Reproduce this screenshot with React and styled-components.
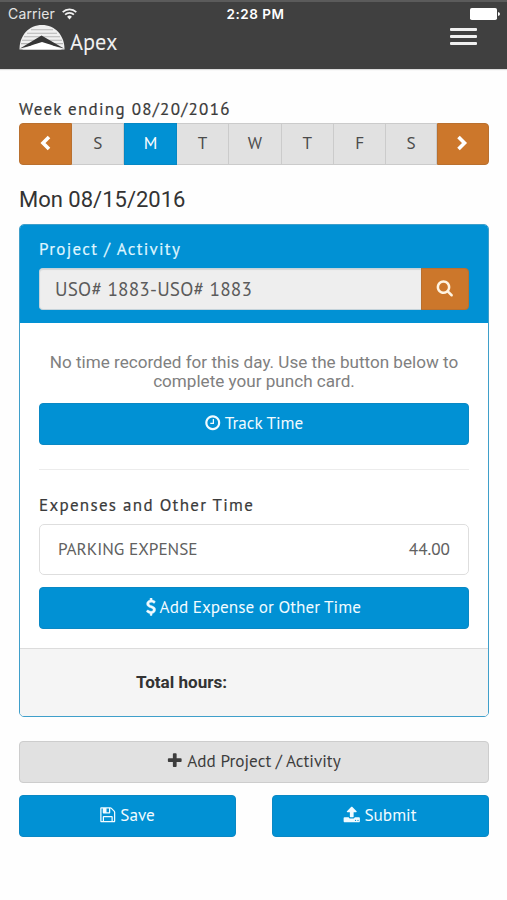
import React from 'react';
import styled, { createGlobalStyle } from 'styled-components';

const blue = '#0191d4';
const orange = '#cc772b';
const humanist = `'PT Sans', 'Noto Sans', 'Open Sans', sans-serif`;

const GlobalStyle = createGlobalStyle`
  * { box-sizing: border-box; }
  body {
    margin: 0;
    background: #fefefe;
    color: #333;
    font-family: Roboto, sans-serif;
  }
  button, input { font: inherit; margin: 0; }
`;

const Screen = styled.div`
  width: 507px;
  height: 900px;
  overflow: hidden;
`;

const TopBar = styled.header`
  height: 69px;
  background: #404040;
  border-top: 2px solid #5b5b5b;
  box-shadow: 0 1px 1px #ddd;
`;

const StatusBar = styled.div`
  display: grid;
  grid-template-columns: 1fr auto 1fr;
  align-items: center;
  height: 22px;
  padding: 1px 7px 0 8px;
  color: #e4e4e4;
  font: 14px/20px Inter, sans-serif;
`;

const Carrier = styled.div`
  display: flex;
  align-items: center;
  gap: 7px;
  letter-spacing: 0.15px;
`;

const Clock = styled.div`
  color: #fff;
  padding-left: 3px;
  font-size: 13.5px;
  font-weight: 600;
  letter-spacing: 0.5px;
`;

const BatteryIcon = styled.svg`
  justify-self: end;
`;

const NavRow = styled.div`
  display: flex;
  align-items: flex-start;
  justify-content: space-between;
  padding: 0 30px 0 19px;
`;

const Brand = styled.div`
  display: flex;
  gap: 5px;
`;

const BrandName = styled.span`
  color: #f0f0f0;
  font: 22.3px/28px ${humanist};
  padding-top: 4px;
`;

const MenuButton = styled.button`
  display: flex;
  flex-direction: column;
  gap: 4px;
  padding: 4px 0 0;
  border: 0;
  background: none;
`;

const MenuLine = styled.span`
  width: 27px;
  height: 3px;
  background: #f0f0f0;
  border-radius: 1px;
`;

const Content = styled.main`
  padding: 28px 18px 0 19px;
`;

const Label = styled.h4`
  margin: 0;
  color: ${p => p.$color || '#3b3b3b'};
  font: 400 17px/24px ${humanist};
  letter-spacing: 1.29px;
  -webkit-text-stroke: 0.2px;
`;

const WeekPicker = styled.div`
  display: grid;
  grid-template-columns: 53px repeat(6, 52.4px) 1fr 52px;
  height: 42px;
  margin-top: 2px;
`;

const WeekCell = styled.button`
  display: flex;
  align-items: center;
  justify-content: center;
  padding: 0 0 3px;
  border: 1px solid ${p => (p.$nav ? '#b9702f' : p.$active ? '#0587c4' : '#cbcbcb')};
  border-left-width: ${p => (p.$nav || p.$active ? '1px' : '0')};
  border-radius: ${p => p.$radius || 0};
  background: ${p => (p.$nav ? orange : p.$active ? blue : '#e1e1e1')};
  color: ${p => (p.$nav || p.$active ? '#fff' : '#4b4b4b')};
  font: 17.2px/22px ${humanist};
`;

const DayTitle = styled.h3`
  margin: 20px 0 9px;
  font-size: 22px;
  font-weight: 400;
  line-height: 30px;
`;

const Panel = styled.section`
  height: 493px;
  border: 1px solid #3f9fca;
  border-radius: 5px;
  overflow: hidden;
  background: #fff;
`;

const PanelHead = styled.div`
  height: 98px;
  padding: 12px 19px 0 19px;
  background: ${blue};
`;

const SearchRow = styled.div`
  display: flex;
  height: 42px;
  margin-top: 7px;
`;

const ProjectInput = styled.input`
  flex: 1;
  min-width: 0;
  padding: 0 15px 1px;
  border: 1px solid #c5d3da;
  border-right: 0;
  border-radius: 4px 0 0 4px;
  box-shadow: inset 0 1px 1px rgba(0, 0, 0, 0.1);
  background: #eee;
  color: #5b5b5b;
  font: 19.2px/24px ${humanist};
  letter-spacing: 0.2px;
`;

const SearchButton = styled.button`
  display: flex;
  align-items: center;
  justify-content: center;
  width: 48px;
  padding: 0 0 2px;
  border: 1px solid #b9702f;
  border-radius: 0 4px 4px 0;
  background: ${orange};
  color: #fff4e2;
`;

const PanelBody = styled.div`
  height: 325px;
  padding: 30px 19px 0 19px;
`;

const EmptyNote = styled.p`
  margin: 0 0 13px;
  color: #808080;
  font-size: 17.1px;
  line-height: 18.5px;
  text-align: center;
  white-space: nowrap;
`;

const Button = styled.button`
  display: flex;
  align-items: center;
  justify-content: center;
  gap: 3.5px;
  width: ${p => p.$width || '100%'};
  height: 42px;
  padding: 0 1px 2px 0;
  border: 1px solid ${p => (p.$muted ? '#cdcdcd' : '#0a88c4')};
  border-radius: 4px;
  background: ${p => (p.$muted ? '#e1e1e1' : blue)};
  color: ${p => (p.$muted ? '#3d3d3d' : '#f1fbff')};
  font: 17.2px/22px ${humanist};
`;

const Divider = styled.hr`
  margin: 24px 0 23px;
  border: 0;
  border-top: 1px solid #ececec;
`;

const ExpenseRow = styled.div`
  display: flex;
  align-items: center;
  justify-content: space-between;
  height: 51px;
  margin: 7px 0 12px;
  padding: 0 18px 2px 18px;
  border: 1px solid #dedede;
  border-radius: 5px;
  color: #616161;
  font: 17.2px/22px ${humanist};
`;

const PanelFoot = styled.div`
  height: 70px;
  padding: 21px 0 0 116px;
  border-top: 1px solid #dcdcdc;
  background: #f5f5f5;
  font-size: 17.1px;
  font-weight: 700;
  line-height: 24px;
`;

const Actions = styled.div`
  display: flex;
  flex-wrap: wrap;
  justify-content: space-between;
  row-gap: 12px;
  margin-top: 24px;
`;

const paths = {
  clock:
    'M1024 544v448q0 14-9 23t-23 9h-320q-14 0-23-9t-9-23v-64q0-14 9-23t23-9h224v-352q0-14 9-23t23-9h64q14 0 23 9t9 23zm416 352q0-148-73-273t-198-198-273-73-273 73-198 198-73 273 73 273 198 198 273 73 273-73 198-198 73-273zm224 0q0 209-103 385.5t-279.5 279.5-385.5 103-385.5-103-279.5-279.5-103-385.5 103-385.5 279.5-279.5 385.5-103 385.5 103 279.5 279.5 103 385.5z',
  save:
    'M512 1536h768v-384h-768v384zm896 0h128v-896q0-14-10-38.5t-20-34.5l-281-281q-10-10-34-20t-39-10v416q0 40-28 68t-68 28h-576q-40 0-68-28t-28-68v-416h-128v1280h128v-416q0-40 28-68t68-28h832q40 0 68 28t28 68v416zm-384-928v-320q0-13-9.5-22.5t-22.5-9.5h-192q-13 0-22.5 9.5t-9.5 22.5v320q0 13 9.5 22.5t22.5 9.5h192q13 0 22.5-9.5t9.5-22.5zm640 32v928q0 40-28 68t-68 28h-1344q-40 0-68-28t-28-68v-1344q0-40 28-68t68-28h928q40 0 88 20t76 48l280 280q28 28 48 76t20 88z',
  plus:
    'M1600 736v192q0 40-28 68t-68 28h-416v416q0 40-28 68t-68 28h-192q-40 0-68-28t-28-68v-416h-416q-40 0-68-28t-28-68v-192q0-40 28-68t68-28h416v-416q0-40 28-68t68-28h192q40 0 68 28t28 68v416h416q40 0 68 28t28 68z',
  search:
    'M1216 832q0-185-131.5-316.5t-316.5-131.5-316.5 131.5-131.5 316.5 131.5 316.5 316.5 131.5 316.5-131.5 131.5-316.5zm512 832q0 52-38 90t-90 38q-54 0-90-38l-343-342q-179 124-399 124-143 0-273.5-55.5t-225-150-150-225-55.5-273.5 55.5-273.5 150-225 225-150 273.5-55.5 273.5 55.5 225 150 150 225 55.5 273.5q0 220-124 399l343 343q37 37 37 90z',
  upload:
    'M1344 1472q0-26-19-45t-45-19-45 19-19 45 19 45 45 19 45-19 19-45zm256 0q0-26-19-45t-45-19-45 19-19 45 19 45 45 19 45-19 19-45zm128-224v320q0 40-28 68t-68 28h-1472q-40 0-68-28t-28-68v-320q0-40 28-68t68-28h427q21 56 70.5 92t110.5 36h256q61 0 110.5-36t70.5-92h427q40 0 68 28t28 68zm-325-648q-17 40-59 40h-256v448q0 26-19 45t-45 19h-256q-26 0-45-19t-19-45v-448h-256q-42 0-59-40-17-39 14-69l448-448q18-19 45-19t45 19l448 448q31 30 14 69z',
  dollar:
    'M1362 1185q0 153-99.5 263.5t-258.5 136.5v175q0 14-9 23t-23 9h-135q-13 0-22.5-9.5t-9.5-22.5v-175q-66-9-127.5-31t-101.5-44.5-74-48-46.5-37.5-17.5-18q-17-21-2-41l103-135q7-10 23-12 15-2 24 9l2 2q113 99 243 125 37 8 74 8 81 0 142.5-43t61.5-122q0-28-15-53t-33.5-42-58.5-37.5-66-32-80-32.5q-39-16-61.5-25t-61.5-26.5-62.5-31-56.5-35.5-53.5-42.5-43.5-49-35.5-58-21-66.5-8.5-78q0-138 98-242t255-134v-180q0-13 9.5-22.5t22.5-9.5h135q14 0 23 9t9 23v176q57 6 110.5 23t87 33.5 63.5 37.5 39 29 15 14q17 18 5 38l-81 146q-8 15-23 16-14 3-27-7-3-3-14.5-12t-39-26.5-58.5-32-74.5-26-85.5-11.5q-95 0-155 43t-60 111q0 26 8.5 48t29.5 41.5 39.5 33 56 31 60.5 27 70 27.5q53 20 81 31.5t76 35 75.5 42.5 62 50 53 63.5 31.5 76.5 13 94z',
};

const Icon = ({ name, size = 17.5, box = '0 0 1792 1792', width, weight = 0 }) => (
  <svg width={width || size} height={size} viewBox={box} fill="currentColor">
    <path d={paths[name]} stroke="currentColor" strokeWidth={weight} />
  </svg>
);

const Chevron = ({ right }) => (
  <svg width="14" height="18" viewBox="0 0 14 18" fill="none" stroke="#fff" strokeWidth="3.6">
    <path d={right ? 'M2.5 3 8.500 9l-6 6' : 'M10 3 4 9l6 6'} />
  </svg>
);

const Wifi = () => (
  <svg width="15" height="12" viewBox="0 0 15 12" fill="none" stroke="#f2f2f2" strokeWidth="1.7">
    <path d="M.7 4.1a9.6 9.6 0 0 1 13.6 0M3.1 6.7a6.2 6.2 0 0 1 8.8 0" />
    <path d="M5.1 8.8a3.4 3.4 0 0 1 4.8 0L7.5 11.4z" fill="#f2f2f2" stroke="none" />
  </svg>
);

const Battery = () => (
  <BatteryIcon width="30" height="12" viewBox="0 0 30 12" fill="#fff">
    <rect width="27" height="12" rx="1.8" />
    <path d="M28 4q2 .5 2 2t-2 2z" />
  </BatteryIcon>
);

const Logo = () => (
  <svg width="46" height="26" viewBox="0 0 46 26">
    <path d="M.5 25.500C.5 11 10 1 23 1s22.500 10 22.500 24.500z" fill="#f0f0f0" />
    <path d="M12 5.700h22M8 9.200h30M5 12.700h36M3 16.200h40M2 19.600h42" stroke="#b4b4b4" strokeWidth="1.100" />
    <path d="M1 24.500 22.500 11.500 45 24.500 23 19z" fill="#353535" />
    <path d="M3 25.500 15 20.500l8-2.500 8 2.500 12 5z" fill="#fff" />
  </svg>
);

const days = ['S', 'M', 'T', 'W', 'T', 'F', 'S'];

export default function App() {
  return (
    <Screen>
      <GlobalStyle />
      <TopBar>
        <StatusBar>
          <Carrier>Carrier <Wifi /></Carrier>
          <Clock>2:28 PM</Clock>
          <Battery />
        </StatusBar>
        <NavRow>
          <Brand>
            <Logo />
            <BrandName>Apex</BrandName>
          </Brand>
          <MenuButton aria-label="Menu">
            <MenuLine /><MenuLine /><MenuLine />
          </MenuButton>
        </NavRow>
      </TopBar>
      <Content>
        <Label>Week ending 08/20/2016</Label>
        <WeekPicker>
          <WeekCell $nav $radius="4px 0 0 4px"><Chevron /></WeekCell>
          {days.map((day, i) => <WeekCell key={i} $active={i === 1}>{day}</WeekCell>)}
          <WeekCell $nav $radius="0 4px 4px 0"><Chevron right /></WeekCell>
        </WeekPicker>
        <DayTitle>Mon 08/15/2016</DayTitle>
        <Panel>
          <PanelHead>
            <Label $color="#dff5ff">Project / Activity</Label>
            <SearchRow>
              <ProjectInput readOnly value="USO# 1883-USO# 1883" />
              <SearchButton aria-label="Search"><Icon name="search" /></SearchButton>
            </SearchRow>
          </PanelHead>
          <PanelBody>
            <EmptyNote>
              No time recorded for this day. Use the button below to<br />
              complete your punch card.
            </EmptyNote>
            <Button><Icon name="clock" />Track Time</Button>
            <Divider />
            <Label>Expenses and Other Time</Label>
            <ExpenseRow>
              <span>PARKING EXPENSE</span>
              <span>44.00</span>
            </ExpenseRow>
            <Button><Icon name="dollar" width={10} box="384 0 1024 1792" weight={50} />Add Expense or Other Time</Button>
          </PanelBody>
          <PanelFoot>Total hours:</PanelFoot>
        </Panel>
        <Actions>
          <Button $muted><Icon name="plus" />Add Project / Activity</Button>
          <Button $width="217px"><Icon name="save" />Save</Button>
          <Button $width="217px"><Icon name="upload" />Submit</Button>
        </Actions>
      </Content>
    </Screen>
  );
}
